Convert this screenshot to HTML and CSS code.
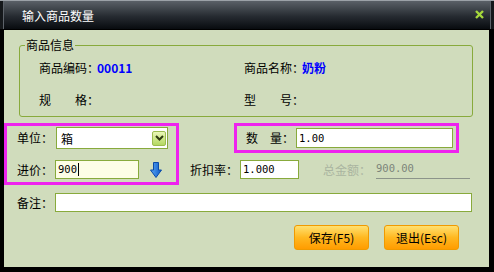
FILE: index.html
```html
<!DOCTYPE html>
<html lang="zh-CN">
<head>
    <meta charset="UTF-8">
    <title>输入商品数量</title>
    <link rel="stylesheet" href="styles.css">
</head>
<body>
    <div class="window">
        <div class="titlebar">
            <span class="title">输入商品数量</span>
            <svg class="close" width="9" height="9" viewBox="0 0 9 9">
                <path d="M1 1 L8 8 M8 1 L1 8" stroke="#a6d83c" stroke-width="2.4" />
            </svg>
        </div>
        <div class="content">
            <div class="group">
                <span class="legend">商品信息</span>
                <div class="group-row">
                    <div class="field"><span class="lbl">商品编码：</span><span class="val">00011</span></div>
                    <div class="field"><span class="lbl">商品名称：</span><span class="val">奶粉</span></div>
                </div>
                <div class="group-row">
                    <div class="field"><span class="lbl">规　　格：</span></div>
                    <div class="field"><span class="lbl">型　　号：</span></div>
                </div>
            </div>

            <div class="entry">
                <div class="mark mark-left">
                    <div class="row">
                        <label class="cap">单位：</label>
                        <div class="combo">
                            <span class="combo-text">箱</span>
                            <span class="combo-btn">
                                <svg width="9" height="6" viewBox="0 0 9 6">
                                    <path d="M1 1 L4.5 4.5 L8 1" fill="none" stroke="#2e3a10" stroke-width="2" />
                                </svg>
                            </span>
                        </div>
                    </div>
                    <div class="row row-price">
                        <label class="cap">进价：</label>
                        <div class="input input-price">900<span class="caret"></span></div>
                        <svg class="arrow" width="12" height="16" viewBox="0 0 12 16">
                            <defs>
                                <linearGradient id="ag" x1="0" y1="0" x2="1" y2="0">
                                    <stop offset="0" stop-color="#5aa8f4" />
                                    <stop offset="1" stop-color="#0b58c8" />
                                </linearGradient>
                            </defs>
                            <path d="M3.5 0.5 H8.5 V8 H11.5 L6 15.5 L0.5 8 H3.5 Z" fill="url(#ag)" stroke="#0a4aa8" stroke-width="1" />
                        </svg>
                    </div>
                </div>

                <div class="right-col">
                    <div class="mark mark-qty">
                        <label class="cap cap-qty">数　量：</label>
                        <div class="input input-qty num">1.00</div>
                    </div>
                    <div class="row row-rate">
                        <label class="cap cap-rate">折扣率：</label>
                        <div class="input input-rate num">1.000</div>
                        <label class="cap cap-total">总金额：</label>
                        <div class="total num">900.00</div>
                    </div>
                </div>
            </div>

            <div class="row note-row">
                <label class="cap">备注：</label>
                <div class="input input-note"></div>
            </div>

            <div class="actions">
                <button class="btn">保存(F5)</button>
                <button class="btn">退出(Esc)</button>
            </div>
        </div>
    </div>
</body>
</html>
```

FILE: styles.css
```css
/* dialog window */
body {
    margin: 0;
    font-family: "Noto Sans CJK SC", "DejaVu Sans", sans-serif;
    font-size: 12px;
    color: #000;
    background-color: #000;
}

.window {
    width: 494px;
    height: 272px;
    background-color: #000;
    display: flex;
    flex-direction: column;
}

.titlebar {
    height: 29px;
    box-sizing: border-box;
    display: flex;
    align-items: center;
    justify-content: space-between;
    padding: 2px 10px 0 22px;
    background: linear-gradient(#5a6067, #262b31 55%, #080b0f);
    border-top: 1px solid #9ba1a7;
    box-shadow: inset 3px 0 #15181b, inset 4px 0 #5d636a, inset -3px 0 #15181b, inset -4px 0 #5d636a;
}

.title {
    color: #fff;
    font-size: 12px;
    line-height: 16px;
}

.close {
    display: block;
    margin-top: -3px;
}

.content {
    flex: none;
    height: 237px;
    margin: 1px 5px 0 4px;
    background-color: #d0dcbc;
    display: flex;
    flex-direction: column;
}

/* product info group */
.group {
    position: relative;
    height: 72px;
    box-sizing: border-box;
    margin: 15px 16px 0 15px;
    padding: 14px 0 0 19px;
    border: 1px solid #88aa3c;
    border-radius: 3px;
    display: flex;
    flex-direction: column;
    gap: 16px;
}

.legend {
    position: absolute;
    top: -9px;
    left: 5px;
    padding: 0 1px;
    line-height: 16px;
    background-color: #d0dcbc;
}

.group-row {
    display: flex;
    line-height: 16px;
    white-space: nowrap;
}

.field {
    width: 205px;
    display: flex;
}

.lbl {
    width: 58px;
    flex: none;
    white-space: nowrap;
}

.val {
    color: #0000ff;
    font-weight: bold;
}

/* entry area */
.entry {
    display: flex;
    margin-top: 6px;
}

.mark {
    border: 3px solid #ee22ee;
    box-sizing: border-box;
}

.mark-left {
    width: 175px;
    height: 62px;
    padding: 1px 0 0 10px;
}

.row {
    display: flex;
    align-items: center;
    white-space: nowrap;
}

.cap {
    width: 39px;
    flex: none;
    line-height: 16px;
    white-space: nowrap;
}

.combo {
    width: 112px;
    height: 22px;
    box-sizing: border-box;
    border: 1px solid #88aa3c;
    background-color: #fff;
    display: flex;
    align-items: center;
    justify-content: space-between;
    padding: 0 1px 0 4px;
}

.combo-btn {
    width: 14px;
    height: 15px;
    box-sizing: border-box;
    border: 1px solid #9cbc50;
    border-radius: 2px;
    background: linear-gradient(#eaf7b8, #b4d862);
    display: flex;
    align-items: center;
    justify-content: center;
}

.input {
    height: 19px;
    box-sizing: border-box;
    border: 1px solid #88aa3c;
    background-color: #fff;
    padding: 0 2px;
    line-height: 17px;
    display: flex;
    align-items: center;
}

.num {
    font-family: "DejaVu Sans Mono", monospace;
    font-size: 10.5px;
}

.row-price {
    margin-top: 11px;
}

.input-price {
    width: 84px;
    background-color: #fdfde6;
    font-family: "DejaVu Sans Mono", monospace;
    font-size: 10.5px;
    margin-left: -1px;
}

.caret {
    width: 1px;
    height: 13px;
    background-color: #000;
    margin-left: 1px;
}

.arrow {
    margin-left: 11px;
    display: block;
}

.right-col {
    padding-left: 11px;
}

.mark-qty {
    width: 225px;
    height: 30px;
    margin-left: 44px;
    padding-left: 9px;
    display: flex;
    align-items: center;
}

.cap-qty {
    width: 50px;
}

.input-qty {
    width: 157px;
    height: 20px;
}

.row-rate {
    margin-top: 7px;
}

.cap-rate {
    width: 50px;
}

.input-rate {
    width: 59px;
}

.cap-total {
    width: 53px;
    margin-left: 24px;
    color: #aab4a0;
}

.total {
    width: 94px;
    height: 19px;
    box-sizing: border-box;
    border-bottom: 1px solid #8c948a;
    color: #7c847a;
    line-height: 17px;
}

/* note + buttons */
.note-row {
    margin-top: 8px;
    padding-left: 13px;
}

.input-note {
    width: 417px;
    margin-left: -1px;
}

.actions {
    display: flex;
    justify-content: flex-end;
    gap: 15px;
    margin-top: 13px;
    padding-right: 30px;
}

.btn {
    width: 75px;
    height: 25px;
    padding: 0;
    border: 1px solid #f09a00;
    border-radius: 3px;
    background: linear-gradient(#ffe070, #ffb820 50%, #ff9c00);
    font-family: "Noto Sans CJK SC", sans-serif;
    font-size: 12px;
    color: #000;
    cursor: pointer;
}
```
